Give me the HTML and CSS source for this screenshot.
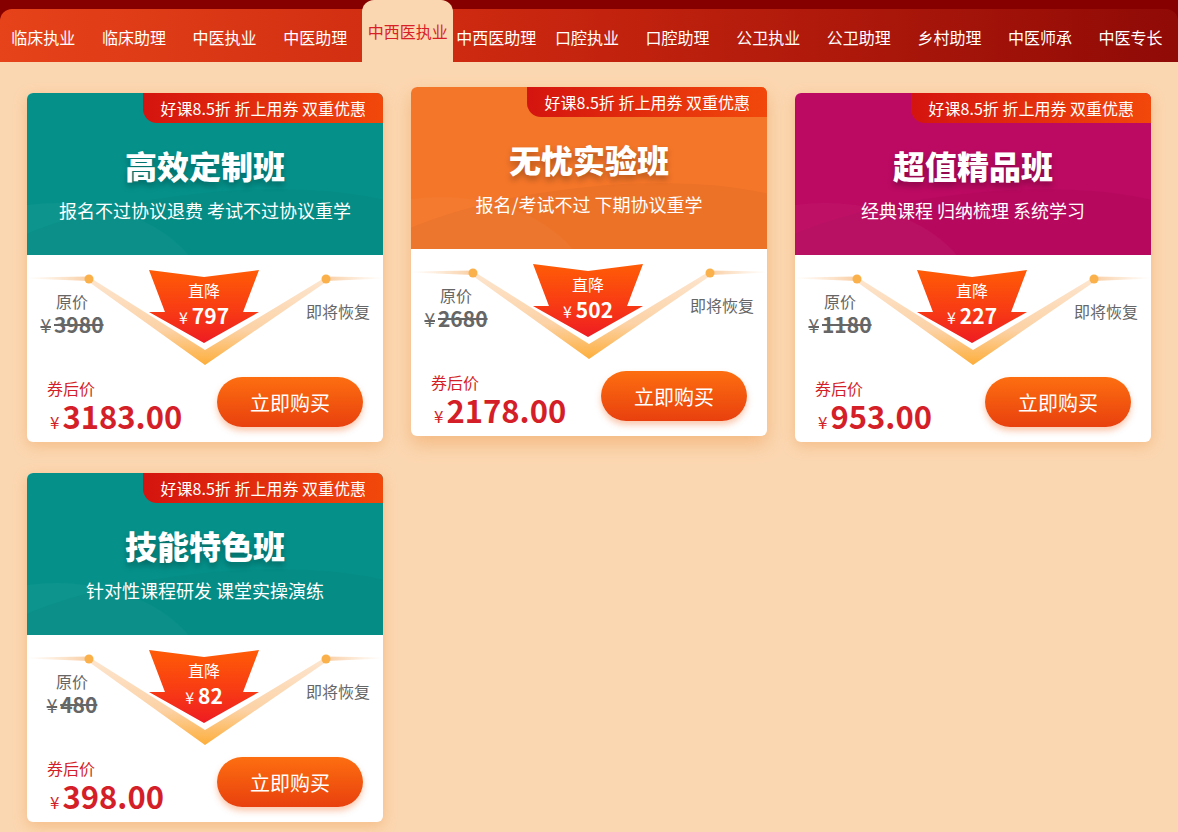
FILE: index.html
```html
<!DOCTYPE html>
<html lang="zh-CN">
<head>
<meta charset="utf-8">
<title>课程班次</title>
<link rel="stylesheet" href="styles.css">
</head>
<body>
<header class="topbar">
  <nav class="nav">
    <a class="nav-item">临床执业</a>
    <a class="nav-item">临床助理</a>
    <a class="nav-item">中医执业</a>
    <a class="nav-item">中医助理</a>
    <a class="nav-item is-active">中西医执业</a>
    <a class="nav-item">中西医助理</a>
    <a class="nav-item">口腔执业</a>
    <a class="nav-item">口腔助理</a>
    <a class="nav-item">公卫执业</a>
    <a class="nav-item">公卫助理</a>
    <a class="nav-item">乡村助理</a>
    <a class="nav-item">中医师承</a>
    <a class="nav-item">中医专长</a>
  </nav>
</header>

<main class="grid">
  <section class="card">
    <div class="head head-teal">
      <div class="badge">好课8.5折 折上用券 双重优惠</div>
      <h2 class="title">高效定制班</h2>
      <p class="sub">报名不过协议退费 考试不过协议重学</p>
    </div>
    <div class="body">
      <svg class="deco" width="356" height="120" viewBox="0 0 356 120"><use href="#deco"/></svg>
      <div class="top">
        <div class="orig"><div class="orig-label">原价</div><div class="orig-price"><span class="yen">¥</span>3980</div></div>
        <div class="drop"><div class="drop-label">直降</div><div class="drop-price"><span class="yen">¥</span>797</div></div>
        <div class="restore">即将恢复</div>
      </div>
      <div class="bottom">
        <div class="final"><div class="final-label">券后价</div><div class="final-price"><span class="yen">¥</span>3183.00</div></div>
        <button class="buy">立即购买</button>
      </div>
    </div>
  </section>

  <section class="card is-raised">
    <div class="head head-orange">
      <div class="badge">好课8.5折 折上用券 双重优惠</div>
      <h2 class="title">无忧实验班</h2>
      <p class="sub">报名/考试不过 下期协议重学</p>
    </div>
    <div class="body">
      <svg class="deco" width="356" height="120" viewBox="0 0 356 120"><use href="#deco"/></svg>
      <div class="top">
        <div class="orig"><div class="orig-label">原价</div><div class="orig-price"><span class="yen">¥</span>2680</div></div>
        <div class="drop"><div class="drop-label">直降</div><div class="drop-price"><span class="yen">¥</span>502</div></div>
        <div class="restore">即将恢复</div>
      </div>
      <div class="bottom">
        <div class="final"><div class="final-label">券后价</div><div class="final-price"><span class="yen">¥</span>2178.00</div></div>
        <button class="buy">立即购买</button>
      </div>
    </div>
  </section>

  <section class="card">
    <div class="head head-magenta">
      <div class="badge">好课8.5折 折上用券 双重优惠</div>
      <h2 class="title">超值精品班</h2>
      <p class="sub">经典课程 归纳梳理 系统学习</p>
    </div>
    <div class="body">
      <svg class="deco" width="356" height="120" viewBox="0 0 356 120"><use href="#deco"/></svg>
      <div class="top">
        <div class="orig"><div class="orig-label">原价</div><div class="orig-price"><span class="yen">¥</span>1180</div></div>
        <div class="drop"><div class="drop-label">直降</div><div class="drop-price"><span class="yen">¥</span>227</div></div>
        <div class="restore">即将恢复</div>
      </div>
      <div class="bottom">
        <div class="final"><div class="final-label">券后价</div><div class="final-price"><span class="yen">¥</span>953.00</div></div>
        <button class="buy">立即购买</button>
      </div>
    </div>
  </section>

  <section class="card">
    <div class="head head-teal">
      <div class="badge">好课8.5折 折上用券 双重优惠</div>
      <h2 class="title">技能特色班</h2>
      <p class="sub">针对性课程研发 课堂实操演练</p>
    </div>
    <div class="body">
      <svg class="deco" width="356" height="120" viewBox="0 0 356 120"><use href="#deco"/></svg>
      <div class="top">
        <div class="orig"><div class="orig-label">原价</div><div class="orig-price"><span class="yen">¥</span>480</div></div>
        <div class="drop"><div class="drop-label">直降</div><div class="drop-price"><span class="yen">¥</span>82</div></div>
        <div class="restore">即将恢复</div>
      </div>
      <div class="bottom">
        <div class="final"><div class="final-label">券后价</div><div class="final-price"><span class="yen">¥</span>398.00</div></div>
        <button class="buy">立即购买</button>
      </div>
    </div>
  </section>
</main>

<svg class="defs" width="0" height="0" aria-hidden="true">
  <defs>
    <linearGradient id="lineL" x1="0" y1="0" x2="1" y2="0">
      <stop offset="0" stop-color="#fbd9b6" stop-opacity="0"/>
      <stop offset="1" stop-color="#f9cda2"/>
    </linearGradient>
    <linearGradient id="lineR" x1="1" y1="0" x2="0" y2="0">
      <stop offset="0" stop-color="#fbd9b6" stop-opacity="0"/>
      <stop offset="1" stop-color="#f9cda2"/>
    </linearGradient>
    <linearGradient id="vband" x1="0" y1="0" x2="0" y2="1">
      <stop offset="0" stop-color="#fde6d0"/>
      <stop offset="0.6" stop-color="#fcd2a6"/>
      <stop offset="1" stop-color="#fdae3a"/>
    </linearGradient>
    <g id="deco">
      <polygon points="0,22.5 62,21.5 62,26 0,23.5" fill="url(#lineL)"/>
      <polygon points="299,21.5 356,22.5 356,23.5 299,26" fill="url(#lineR)"/>
      <polygon points="62,22 178,95 299,22 299,27 178,110 62,27" fill="url(#vband)"/>
      <circle cx="62" cy="24" r="4.5" fill="#fbb14b"/>
      <circle cx="299" cy="24" r="4.5" fill="#fbb14b"/>
    </g>
  </defs>
</svg>
</body>
</html>
```

FILE: styles.css
```css
* { box-sizing: border-box; }

html, body {
  margin: 0;
  padding: 0;
}

body {
  background: #fbd7b1;
  font-family: "Noto Sans CJK SC", "Noto Sans", sans-serif;
  width: 1178px;
  min-height: 832px;
  overflow: hidden;
}

.topbar {
  background: #860000;
  padding-top: 9px;
}

.nav {
  display: flex;
  height: 53px;
  border-radius: 12px 12px 0 0;
  background: linear-gradient(90deg, #e6431a 0%, #c9260f 45%, #900a06 100%);
}

.nav-item {
  flex: 1;
  display: flex;
  align-items: center;
  justify-content: center;
  padding-top: 3px;
  color: #fff;
  font-size: 16px;
  white-space: nowrap;
  margin-left: -2px;
  margin-right: 2px;
}

.nav-item.is-active {
  margin-top: -9px;
  height: 62px;
  padding-top: 0;
  background: #fbd7b1;
  color: #d81f28;
  border-radius: 12px 12px 0 0;
  margin-left: 0;
  margin-right: 0;
}

.grid {
  width: 1124px;
  margin: 31px auto 0;
  display: grid;
  grid-template-columns: repeat(3, 356px);
  column-gap: 28px;
  row-gap: 31px;
}

.card {
  position: relative;
  background: #fff;
  border-radius: 6px;
  overflow: hidden;
  box-shadow: 0 4px 14px rgba(236, 140, 60, 0.35);
}

.card.is-raised {
  transform: translateY(-6px);
  box-shadow: 0 8px 18px rgba(236, 140, 60, 0.4);
}

.head {
  position: relative;
  height: 162px;
  padding-top: 52px;
  text-align: center;
  color: #fff;
  overflow: hidden;
}

.head::before {
  content: "";
  position: absolute;
  left: -60px;
  right: -60px;
  top: 100px;
  height: 140px;
  border-radius: 50%;
  background: rgba(0, 0, 0, 0.03);
  transform: rotate(-6deg);
}

.head::after {
  content: "";
  position: absolute;
  left: -120px;
  top: 110px;
  width: 300px;
  height: 200px;
  border-radius: 50%;
  background: rgba(255, 255, 255, 0.03);
}

.head-teal { background: #05918a; }
.head-orange { background: #f47629; }
.head-magenta { background: #bc0a62; }

.badge {
  position: absolute;
  top: 0;
  right: 0;
  z-index: 2;
  height: 30px;
  line-height: 30px;
  padding: 0 17px 0 18px;
  font-size: 16px;
  color: #fff;
  background: linear-gradient(90deg, #d4140f, #f2480b);
  border-bottom-left-radius: 14px;
  white-space: nowrap;
}

.title {
  position: relative;
  z-index: 1;
  margin: 0;
  font-size: 32px;
  line-height: 40px;
  font-weight: 900;
  letter-spacing: 0;
  text-shadow: 0 4px 6px rgba(0, 0, 0, 0.28);
}

.sub {
  position: relative;
  z-index: 1;
  margin: 13px 0 0;
  font-size: 18px;
  line-height: 24px;
}

.body {
  position: relative;
  height: 187px;
  display: flex;
  flex-direction: column;
}

.deco {
  position: absolute;
  left: 0;
  top: 0;
}

.defs {
  position: absolute;
  width: 0;
  height: 0;
}

.top {
  position: relative;
  z-index: 1;
  height: 112px;
  display: grid;
  grid-template-columns: 122px 110px 1fr;
}

.orig {
  justify-self: start;
  display: flex;
  flex-direction: column;
  align-items: center;
  padding-top: 36px;
  margin-left: 12px;
  width: 66px;
  color: #666;
}

.orig-label {
  font-size: 16px;
  line-height: 20px;
}

.orig-price {
  margin-top: 1px;
  font-size: 21px;
  line-height: 24px;
  font-weight: 700;
  text-decoration: line-through;
  text-decoration-thickness: 2px;
  white-space: nowrap;
}

.orig-price .yen {
  font-size: 19px;
  font-weight: 400;
  margin-right: 3px;
}

.drop {
  margin-top: 15px;
  height: 73px;
  padding-top: 10px;
  text-align: center;
  color: #fff;
  background: linear-gradient(180deg, #ff5c06 0%, #f83b14 55%, #ee1c22 100%);
  clip-path: polygon(0 0, 50% 9.5%, 100% 0, 85.5% 57.5%, 100% 57.5%, 50% 100%, 0 57.5%, 14.5% 57.5%);
}

.drop-label {
  font-size: 16px;
  line-height: 20px;
}

.drop-price {
  margin-top: 2px;
  font-size: 21px;
  line-height: 26px;
  font-weight: 700;
  white-space: nowrap;
}

.drop-price .yen {
  font-size: 16px;
  font-weight: 400;
  margin-right: 4px;
}

.restore {
  justify-self: end;
  padding: 46px 13px 0 0;
  font-size: 16px;
  line-height: 20px;
  color: #666;
}

.bottom {
  position: relative;
  z-index: 1;
  display: flex;
  justify-content: space-between;
  align-items: flex-start;
  padding: 10px 20px 0 20px;
}

.final {
  margin-top: 1px;
  color: #d41f28;
}

.final-label {
  font-size: 16px;
  line-height: 20px;
}

.final-price {
  padding-left: 3px;
  font-size: 31px;
  line-height: 36px;
  font-weight: 700;
  white-space: nowrap;
}

.final-price .yen {
  font-size: 17px;
  font-weight: 400;
  margin-right: 3px;
}

.buy {
  width: 146px;
  height: 50px;
  border: 0;
  border-radius: 25px;
  background: linear-gradient(180deg, #fd6e10 0%, #e8400e 100%);
  box-shadow: 0 4px 6px rgba(240, 100, 30, 0.35);
  color: #fff;
  font-family: "Noto Sans CJK SC", sans-serif;
  font-size: 20px;
  padding: 0;
  cursor: pointer;
}
```
